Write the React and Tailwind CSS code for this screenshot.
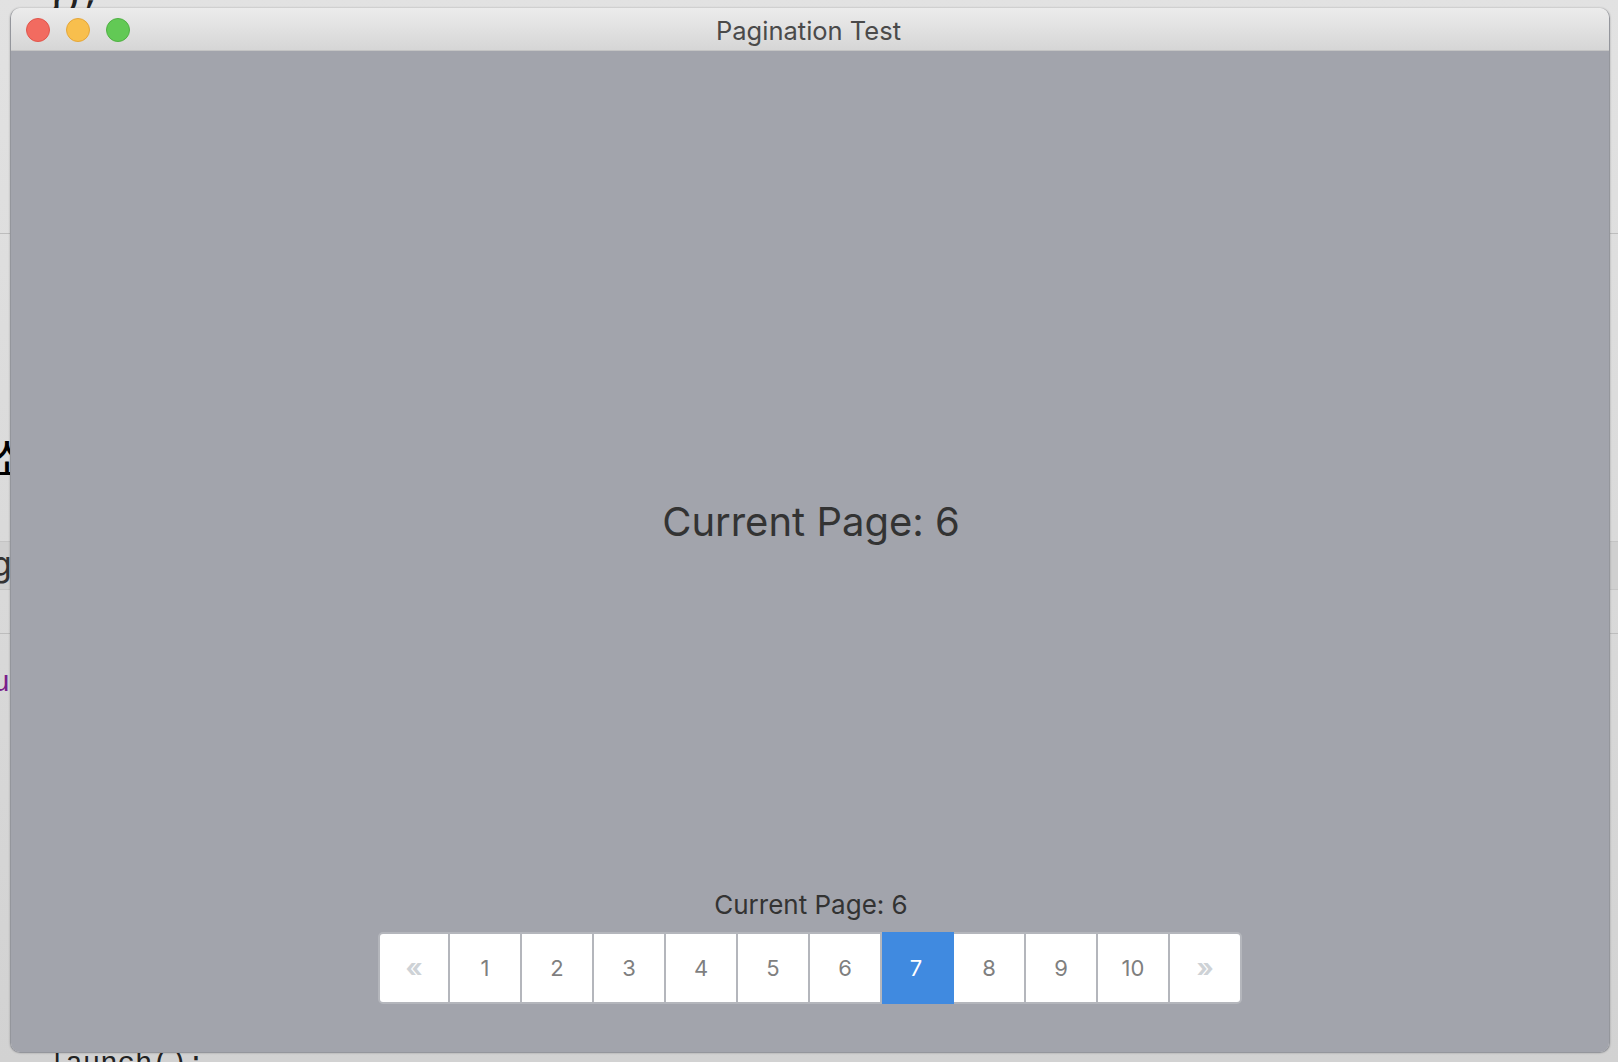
import React from 'react';

const PAGES = ['1', '2', '3', '4', '5', '6', '7', '8', '9', '10'];
const ACTIVE_PAGE = '7';

function PageButton({ label, active }) {
  if (active) {
    return (
      <button className="w-[72px] h-[72px] -my-[2px] -mr-[2px] pr-[4px] flex items-center justify-center bg-[#408ae0] text-white text-[22px] shrink-0">
        {label}
      </button>
    );
  }
  return (
    <button className="w-[70px] h-[68px] flex items-center justify-center bg-white text-[#7f7f7f] text-[22px] shrink-0">
      {label}
    </button>
  );
}

function Pagination() {
  return (
    <nav className="flex items-center gap-[2px] bg-[#b4b6bc] border-2 border-[#b4b6bc] rounded-[5px] h-[72px]">
      <button className="w-[68px] h-[68px] flex items-center justify-center bg-white rounded-l-[3px] text-[#ced2d6] text-[26px] font-bold pb-[2px] shrink-0">
        «
      </button>
      {PAGES.map((page) => (
        <PageButton key={page} label={page} active={page === ACTIVE_PAGE} />
      ))}
      <button className="w-[70px] h-[68px] flex items-center justify-center bg-white rounded-r-[3px] text-[#ced2d6] text-[26px] font-bold pb-[2px] shrink-0">
        »
      </button>
    </nav>
  );
}

function TitleBar() {
  return (
    <div className="relative h-[43px] shrink-0 flex items-center justify-center pt-1 pr-[3px] bg-gradient-to-b from-[#ececec] to-[#d6d6d6] border-b border-[#c4c4c4]">
      <div className="absolute left-[15px] top-[10px] flex gap-[16px]">
        <span className="w-[24px] h-[24px] rounded-full bg-[#f26b60] border border-[#e0564c]" />
        <span className="w-[24px] h-[24px] rounded-full bg-[#f8bf4d] border border-[#e4a63a]" />
        <span className="w-[24px] h-[24px] rounded-full bg-[#62c955] border border-[#50b044]" />
      </div>
      <span className="text-[25.5px] text-[#4a4a4a] leading-none">Pagination Test</span>
    </div>
  );
}

export default function App() {
  return (
    <div className="relative h-[1062px] overflow-hidden bg-gradient-to-b from-[#e2e2e2] to-[#d2d2d2] font-['Inter',sans-serif]">
      {/* editor behind the window, only its edges show */}
      <div className="absolute left-0 right-0 top-[233px] h-px bg-[#bdbdbd]" />
      <div className="absolute left-0 right-0 top-[541px] h-[49px] bg-[#cfcfcf] border-y border-[#c4c4c4]" />
      <div className="absolute left-0 right-0 top-[633px] h-px bg-[#bdbdbd]" />
      <div className="absolute left-[47px] top-[-24px] font-['Liberation_Mono',monospace] text-[29px] font-bold text-[#222222]">{'});'}</div>
      <div className="absolute left-[48px] top-[1043px] font-['Liberation_Mono',monospace] text-[29px] text-[#222222]">launch();</div>
      <div className="absolute left-[-14px] top-[422px] text-[46px] leading-normal text-black font-['Noto_Sans_CJK_SC',sans-serif]">소</div>
      <div className="absolute left-[-9px] top-[538px] text-[34px] text-[#333333]">g</div>
      <div className="absolute left-[-8px] top-[661px] font-['Liberation_Mono',monospace] text-[30px] text-[#7a1f8c]">u</div>

      <div className="absolute left-[10px] top-[8px] w-[1600px] h-[1045px] flex flex-col rounded-[10px] overflow-hidden border-x border-b border-[#94969c] shadow-[0_0_2px_rgba(0,0,0,0.3)]">
        <TitleBar />
        <main className="flex-1 flex flex-col items-center bg-[#a2a4ac]">
          <div className="flex-1 flex items-center justify-center pt-[104px] pb-[4px] pl-[2px]">
            <h1 className="text-[40px] font-normal text-[#333333] leading-none">Current Page: 6</h1>
          </div>
          <p className="text-[26px] text-[#333333] leading-none mb-[14px] pl-[2px]">Current Page: 6</p>
          <div className="mb-[48px]">
            <Pagination />
          </div>
        </main>
      </div>
    </div>
  );
}
